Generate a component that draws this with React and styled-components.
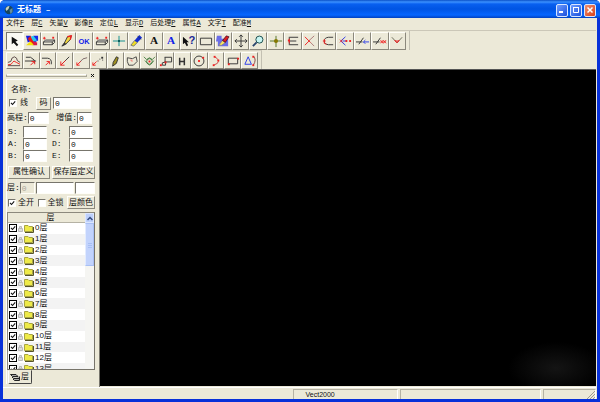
import React from "react";
import styled, { createGlobalStyle, css } from "styled-components";

const face = "#ece9d8";
const raised = css`
  border: 1px solid;
  border-color: #fffef8 #8b887c #8b887c #fffef8;
`;
const sunken = css`
  border: 1px solid;
  border-color: #77756c #fffef8 #fffef8 #77756c;
`;

const GlobalStyle = createGlobalStyle`
  *, *::before, *::after { box-sizing: border-box; }
  body {
    margin: 0;
    background: #fff;
    color: #111;
    font: 8px/10px "Liberation Mono", "Noto Sans CJK SC", monospace;
  }
  button, input { font: inherit; color: inherit; margin: 0; border-radius: 0; }
`;

const Window = styled.div`
  height: 100vh;
  min-height: 400px;
  display: flex;
  flex-direction: column;
  padding: 0 3px 3px;
  background: #0831d9;
  border-radius: 5px 5px 0 0;
  overflow: hidden;
`;
const TitleBar = styled.header`
  height: 18px;
  flex: none;
  display: flex;
  align-items: center;
  gap: 3px;
  margin: 0 -3px;
  padding: 2px 4px 0;
  background: linear-gradient(#0a50c8 0, #3b91ff 2px, #0860f0 4px, #0054e3 9px, #0666ff 15px, #0141c0 18px);
`;
const Title = styled.h1`
  flex: 1;
  margin: 0;
  color: #fff;
  font-size: 8px;
  line-height: 10px;
  font-weight: bold;
`;
const Captions = styled.div`
  display: flex;
  gap: 2px;
`;
const CaptionButton = styled.button`
  width: 12px;
  height: 13px;
  display: grid;
  place-items: center;
  padding: 0;
  border: 1px solid #d8e6ff;
  border-radius: 2px;
  background: ${(p) => (p.$close ? "linear-gradient(135deg,#f09070,#d84018)" : "linear-gradient(135deg,#6c9cff,#1c50dc)")};
`;
const Client = styled.div`
  flex: 1;
  min-height: 0;
  display: flex;
  flex-direction: column;
  padding-right: 1px;
  background: ${face};
`;
const MenuBar = styled.nav`
  height: 13px;
  display: flex;
  flex: none;
  align-items: flex-start;
  gap: 7px;
  padding: 0 3px;
  border-bottom: 1px solid #cbc7b8;
`;
const MenuItem = styled.button`
  padding: 0;
  border: 0;
  background: none;
  font-size: 7px;
  line-height: 10px;
  white-space: nowrap;
`;
const ToolBar = styled.div`
  flex: none;
  width: ${(p) => p.$width}px;
  display: grid;
  grid-template-columns: repeat(${(p) => p.$count}, 1fr);
  height: 19px;
  padding: 1px 3px 0;
  border-right: 1px solid #c3c0b2;
  & + & { border-top: 1px solid #d5d1c2; }
`;
const ToolButton = styled.button`
  display: grid;
  place-items: center;
  min-width: 0;
  padding: 0;
  background: ${(p) => (p.$pressed ? "#faf9f3" : face)};
  ${(p) => (p.$pressed ? sunken : raised)}
  svg { display: block; width: 14px; height: 14px; }
`;
const Work = styled.div`
  flex: 1;
  min-height: 0;
  display: flex;
`;
const Sidebar = styled.aside`
  width: 97px;
  flex: none;
  display: flex;
  flex-direction: column;
  padding: 3px 4px 3px 3px;
  border-right: 1px solid #77756c;
`;
const Grip = styled.div`
  display: flex;
  align-items: center;
  height: 7px;
  flex: none;
  gap: 3px;
`;
const GripLines = styled.span`
  flex: 1;
  height: 3px;
  border: 1px solid #aaa799;
  border-top-color: #fff;
`;
const CloseDock = styled.button`
  width: 5px;
  height: 7px;
  padding: 0;
  border: 0;
  background: none;
  svg { display: block; }
`;
const Panel = styled.div`
  flex: 1;
  min-height: 0;
  display: flex;
  flex-direction: column;
  border-top: 1px solid #fff;
  border-left: 1px solid #fff;
`;
const Row = styled.div`
  flex: none;
  display: flex;
  align-items: center;
  height: ${(p) => p.$h || 15}px;
  gap: ${(p) => p.$gap || 0}px;
  padding: 0 ${(p) => p.$right || 0}px 0 ${(p) => p.$left || 0}px;
  justify-content: ${(p) => (p.$spread ? "space-between" : "flex-start")};
  white-space: nowrap;
`;
const Name = styled.span`
  padding: 3px 0 0 4px;
`;
const Field = styled.label`
  display: flex;
  align-items: center;
  gap: ${(p) => p.$gap || 0}px;
`;
const TextInput = styled.input`
  width: ${(p) => p.$w}px;
  height: 12px;
  padding: 0 1px;
  line-height: 10px;
  background: #fff;
  ${sunken}
  &:disabled { background: ${face}; color: #aaa799; }
`;
const Grow = styled(TextInput)`
  flex: 1;
  min-width: 0;
`;
const Coefs = styled.div`
  flex: none;
  display: grid;
  grid-template-columns: 15px 23px 23px 24px;
  grid-auto-rows: 12px;
  align-items: center;
  padding: 0 0 2px 1px;
  label:nth-of-type(even) { padding-left: 6px; }
`;
const Push = styled.button`
  height: 13px;
  width: ${(p) => p.$w}px;
  padding: 0;
  line-height: 10px;
  white-space: nowrap;
  background: ${face};
  ${raised}
`;
const Check = styled.input`
  appearance: none;
  width: 8px;
  height: 8px;
  background: #fff;
  ${(p) => (p.$flat ? css`border: 1px solid #000;` : sunken)}
  &:checked {
    background: #fff url("data:image/svg+xml,%3Csvg xmlns='http://www.w3.org/2000/svg' viewBox='0 0 6 6'%3E%3Cpath d='M1 2.8l1.5 1.7L5.2 1.3' fill='none' stroke='%23111' stroke-width='1.1'/%3E%3C/svg%3E") center / 6px 6px;
  }
`;
const Layers = styled.section`
  flex: 1;
  min-height: 0;
  display: grid;
  grid-template-columns: 1fr 9px;
  margin-top: 3px;
  border: 1px solid;
  border-color: #8c897d #77746a #77746a #8c897d;
  background: #fff;
  overflow: hidden;
`;
const LayerColumn = styled.div`
  min-width: 0;
  overflow: hidden;
`;
const LayerHead = styled.div`
  height: 10px;
  padding-left: 8px;
  text-align: center;
  line-height: 9px;
  background: ${face};
  border-bottom: 1px solid #b5b2a4;
`;
const LayerList = styled.ul`
  display: grid;
  grid-auto-rows: 1fr;
  height: 151px;
  margin: 0;
  padding: 0;
  list-style: none;
`;
const Layer = styled.li`
  display: flex;
  align-items: center;
  padding-left: 1px;
  font-family: "Liberation Sans", "Noto Sans CJK SC", sans-serif;
  &:nth-child(even) { background: #f3f3f3; }
  label { display: flex; align-items: center; gap: 1px; }
  svg { flex: none; }
`;
const Scroll = styled.div`
  background: #f5f5f2;
`;
const ScrollUp = styled.button`
  display: grid;
  place-items: center;
  width: 9px;
  height: 10px;
  padding: 0;
  border: 1px solid #dbe6ff;
  background: #bdd0fb;
`;
const Thumb = styled.div`
  height: 43px;
  border: 1px solid #a9c0f4;
  border-left-color: #e2ebff;
  background: #c2d3fc;
  display: grid;
  place-items: center;
`;
const TabButton = styled.button`
  flex: none;
  align-self: flex-start;
  display: flex;
  align-items: center;
  gap: 1px;
  width: 24px;
  height: 14px;
  margin-left: 1px;
  padding: 0 1px;
  background: ${face};
  border: 1px solid;
  border-color: ${face} #444 #444 #fff;
  border-radius: 0 0 2px 2px;
`;
const Canvas = styled.main`
  flex: 1;
  min-width: 0;
  margin-bottom: 1px;
  border-top: 1px solid #555;
  background: radial-gradient(ellipse 48px 26px at calc(100% - 40px) calc(100% - 18px), #141414, #000) #000;
`;
const Status = styled.footer`
  flex: none;
  height: 12px;
  display: grid;
  grid-template-columns: 289fr 106fr 142fr 53fr;
  gap: 2px;
  padding-top: 1px;
  border-top: 1px solid #fff;
  font-family: "Liberation Sans", sans-serif;
  font-size: 7px;
`;
const StatusCell = styled.div`
  padding-left: 12px;
  line-height: 9px;
  border-top: 1px solid #b5b2a4;
  border-left: 1px solid #b5b2a4;
  border-right: 1px solid #fff;
  display: flex;
  justify-content: space-between;
  &:first-child { border-color: transparent; }
`;

const K = "#333";
const R = "#f02020";
const B = "#2838e8";
const L = ({ d, c = K, w = 1, f = "none" }) => <path d={d} stroke={c} strokeWidth={w} fill={f} />;
const Dot = ({ x, y, c = R, s = 2 }) => <rect x={x} y={y} width={s} height={s} fill={c} />;
const Glyph = ({ c, children, size, family }) => (
  <text x="7.5" y="11" textAnchor="middle" fill={c} fontSize={size} fontWeight="bold" fontFamily={family}>{children}</text>
);
const box = (
  <>
    <L d="M1.5 8.5L4 6.5H13.5L11 8.5Z" f="#f8f6ee" />
    <L d="M1.5 8.5V11.5H11V8.5M11 11.5L13.5 9V6.5" />
    <L d="M1 4.5H4M2.5 3V6" c={R} /><Dot x={11} y={3} />
  </>
);

const mainTools = [
  ["选择", <path d="M4 3V11L6 9.4L9.5 13L11 11.6L8 8.2L10.5 7Z" fill="#111" />],
  ["颜色", <><path d="M1 2H6L7 7L3 9Z" fill="#1420e0" /><path d="M6 2L12 10L8 12L3 5Z" fill="#e81818" /><path d="M9 2H14V7L10 9Z" fill="#1828e8" /><path d="M6 3L9 2L13 7L9 8Z" fill="#28c8ec" /><path d="M1 12L6 8L10 12Z" fill="#f4e000" /><path d="M9 8L13 9V12H9Z" fill="#d81848" /></>],
  ["图层", box],
  ["画笔", <><L d="M2 13L5 9L6 11Z" f="#222" /><L d="M5 9L8 3L12 2L11 6L6 11Z" f="#f0d840" /><L d="M8 3L12 2L11 6" c={R} w={1.5} /></>],
  ["确定", <Glyph c="#1020e8" size={8} family="Liberation Sans">OK</Glyph>],
  ["编辑图层", box],
  ["十字", <><L d="M1 7.5H14M7.5 2V13" c="#078b8b" /><Dot x={6.5} y={6.5} c="#055" /></>],
  ["刷子", <><L d="M2 12L6 7L9 9L5 13Z" f="#f2e020" c="#777" /><path d="M6 7L11 1L14 4L9 9Z" fill="#152ed0" /><L d="M9 2L13 6" c="#222" w={0.6} /></>],
  ["文字", <Glyph c="#111" size={12} family="Liberation Serif">A</Glyph>],
  ["彩色文字", <Glyph c="#1020e8" size={12} family="Liberation Serif">A</Glyph>],
  ["帮助", <><path d="M1 3V11L3 9.4L5 13L6.6 12L5 8.8H7.5Z" fill="#111" /><text x="7" y="11" fontSize="12" fontWeight="bold" fill="#1c2a96" fontFamily="Liberation Sans">?</text></>],
  ["矩形", <L d="M1.5 4.5H13.5V11.5H1.5Z" />],
  ["填充", <><path d="M1 2H6V5H13V13H2V8H0Z" fill="#6a6de8" /><L d="M3 12L7 7L10 9L6 12Z" f="#f7e460" c="#777" w={0.6} /><L d="M7 7L11 2L14 3L10 9Z" f="#d82020" c="#302" w={0.7} /></>],
  ["移动", <L d="M1 7.5H14M7.5 1V14M3 5.5L1 7.5L3 9.5M12 5.5L14 7.5L12 9.5M5.5 3L7.5 1L9.5 3M5.5 12L7.5 14L9.5 12" />],
  ["缩放", <><circle cx="9" cy="6" r="3.8" fill="#c8f5f2" stroke="#164848" /><L d="M6 9L2 13" w={2} c="#28446c" /></>],
  ["定位点", <><L d="M1 7.5H14M7.5 2V14" c="#517228" /><circle cx="7.5" cy="7.5" r="2.2" fill="#867800" /></>],
  ["平行线", <><L d="M4 3.5H13M4 7.5H11M4 11.5H13" /><L d="M3.5 3V12" c={K} /><Dot x={2} y={6} /><L d="M3.5 5V10" c={R} /></>],
  ["剪断", <><L d="M6 7.5L12 2M8 9L12 13" c="#a77" /><L d="M2 3L8 9M7 7L2 12" c={R} /></>],
  ["圆角", <><L d="M13 3.5H8Q3.5 4 3.5 7.5T8 11.5H13" /><L d="M2 7.5H5M3.5 5.5V10L6 11" c={R} /></>],
  ["分解", <><L d="M8 3L3 7.5L8 12" c={B} /><L d="M2 6L5 9M2 9L5 6" c={R} w={0.8} /><L d="M5 7.5H9" c={B} /><Dot x={8} y={6.5} /><Dot x={12} y={6.5} /></>],
  ["延伸", <><L d="M0 8.5H7M3 11L8 4" /><L d="M8 8.5H14M10 6.5L8 8.5L10 10.5" c={B} /></>],
  ["修剪", <><L d="M0 8.5H7M3 11L8 4" /><L d="M8 8.5H14M8 6.5L11 10M11 6.5L8 10M11 6.5L14 10M14 6.5L11 10" c={R} w={0.8} /></>],
  ["节点", <><L d="M2 3.5L7.5 9.5L13 3.5" c="#665" /><L d="M5 6.5L7.5 9.5L10 6.5M5.5 7.5H9.5" c={R} /></>],
];
const drawTools = [
  ["等高线", <><L d="M1 9L4 8Q5 3 8 3Q11 4 11 7L14 9M1 12.5H14" c="#544" /><L d="M1 11.5Q5 12 6 9T10 9L14 11" c={R} /></>],
  ["曲线", <><L d="M2 3.5H7L11 6.5V10M1 7.5H13" /><L d="M7 12L11 8M8 8H11.5V11" c={R} /></>],
  ["弧段", <><L d="M1 4.5H7Q12 5 11 11" /><L d="M5 12L9 8M6 8H9V11" c={R} /></>],
  ["直线", <><L d="M3 12L12 3" /><L d="M3 8V12H7M3 12L8 7" c={R} /></>],
  ["线段", <><L d="M5 9Q8 4 13 4" c="#766" /><L d="M2 12L6 8M2 9V12H5" c={R} /></>],
  ["点线", <><L d="M2 12L6 8M2 9V12H5" c={R} /><Dot x={7} y={7} c={K} s={1} /><Dot x={9} y={5} c={K} s={1} /><Dot x={11} y={3} c={K} /><Dot x={12} y={6} c={K} s={1} /></>],
  ["铅笔", <L d="M5 13L5.5 9L9 3L11 4L9 10Z" f="#a09020" />],
  ["多边形", <><L d="M2.5 4L8 5L12 3L13 8L9 12H4L2.5 8Z" w={0.9} /><Dot x={6} y={6} s={1} /><Dot x={7} y={7} s={1} /></>],
  ["闭合", <><L d="M2 3L5 6L8 4L11 6L14 3M3 7L8 12L13 7" c="#256825" w={0.8} /><circle cx="8" cy="8" r="3" fill="none" stroke="#256825" strokeWidth="0.8" /><Dot x={7} y={7} /></>],
  ["折线", <><L d="M6 3.5H13.5V8.5H6.5V3.5M7 8.5L3.5 9.5V12H7V9" /><Dot x={1} y={11} /><Dot x={6} y={8} /></>],
  ["水平", <L d="M5 4V12M10 4V12M5 8H10" w={1.6} />],
  ["圆", <><circle cx="7.5" cy="7.5" r="5.3" fill="none" stroke={K} /><Dot x={6.5} y={6.5} /><Dot x={11} y={3} /></>],
  ["圆弧", <><L d="M6 3Q12 6 9 10L5 12" c="#c44" /><Dot x={5} y={2} /><Dot x={9} y={6} /><Dot x={4} y={11} /></>],
  ["方框", <><L d="M2.5 4.5H12.5V10.5H2.5Z" /><Dot x={12} y={4} /><Dot x={2} y={10} /></>],
  ["三角", <><L d="M5.5 3L9 11H2Z" c={B} /><L d="M11 2Q15 6 11 12" c="#844" /><Dot x={10} y={2} /><Dot x={10} y={11} /></>],
];
const menus = [["文件", "F"], ["层", "C"], ["矢量", "V"], ["影像", "R"], ["定位", "L"], ["显示", "D"], ["后处理", "P"], ["属性", "A"], ["文字", "T"], ["配准", "M"]];

const Tools = ({ items, width, label, pressed }) => (
  <ToolBar role="toolbar" aria-label={label} $count={items.length} $width={width}>
    {items.map(([name, icon], i) => (
      <ToolButton key={name} aria-label={name} $pressed={i === pressed}>
        <svg viewBox="0 0 15 15">{icon}</svg>
      </ToolButton>
    ))}
  </ToolBar>
);
const Coef = ({ name, value }) => (
  <>
    <label htmlFor={`coef-${name}`}>{name}:</label>
    <TextInput id={`coef-${name}`} defaultValue={value} $w={24} />
  </>
);

export default function App() {
  return (
    <Window>
      <GlobalStyle />
      <TitleBar>
        <svg width="10" height="10" viewBox="0 0 9 10">
          <circle cx="4.5" cy="5" r="4.3" fill="#174660" />
          <path d="M1 4Q2 1 5 1L4 4L2 6Z" fill="#c8d2c2" /><path d="M5 5L8 3V7L6 9Z" fill="#668f9a" />
        </svg>
        <Title>无标题 –</Title>
        <Captions>
          <CaptionButton aria-label="最小化"><svg width="8" height="8"><path d="M1 6H5" stroke="#fff" strokeWidth="2" /></svg></CaptionButton>
          <CaptionButton aria-label="最大化"><svg width="8" height="8"><path d="M1 1.5H7M1.5 1V6.5H6.5V1" fill="none" stroke="#fff" /></svg></CaptionButton>
          <CaptionButton $close aria-label="关闭"><svg width="8" height="8"><path d="M1.5 1.5L6.5 6.5M6.5 1.5L1.5 6.5" stroke="#fff" strokeWidth="1.5" /></svg></CaptionButton>
        </Captions>
      </TitleBar>
      <Client>
        <MenuBar>
          {menus.map(([text, key]) => <MenuItem key={text}>{text}<u>{key}</u></MenuItem>)}
        </MenuBar>
        <Tools items={mainTools} width={407} label="主工具栏" pressed={0} />
        <Tools items={drawTools} width={259} label="绘图工具栏" />
        <Work>
          <Sidebar>
            <Grip>
              <GripLines />
              <CloseDock aria-label="关闭面板"><svg width="5" height="7"><path d="M1 2L4 5M4 2L1 5" stroke="#111" /></svg></CloseDock>
            </Grip>
            <Panel>
              <Row $h={16}><Name>名称:</Name></Row>
              <Row $h={14} $left={2} $right={4} $gap={2}>
                <Field $gap={3}><Check type="checkbox" defaultChecked />线</Field>
                <Row $h={14} $left={6}><Push $w={15}>码</Push></Row>
                <Grow aria-label="码" defaultValue="0" />
              </Row>
              <Row $h={16} $right={3} $spread>
                <Field>高程:<TextInput $w={21} defaultValue="0" /></Field>
                <Field>增值:<TextInput $w={15} defaultValue="0" /></Field>
              </Row>
              <Coefs>
                <Coef name="S" value="" /><Coef name="C" value="0" />
                <Coef name="A" value="0" /><Coef name="D" value="0" />
                <Coef name="B" value="0" /><Coef name="E" value="0" />
              </Coefs>
              <Row $h={16} $left={1} $spread><Push $w={42}>属性确认</Push><Push $w={43}>保存层定义</Push></Row>
              <Row $h={16} $gap={1}>
                <Field>层:<TextInput $w={15} defaultValue="0" disabled /></Field>
                <Grow aria-label="层名称" /><TextInput aria-label="层编号" $w={20} />
              </Row>
              <Row $h={13} $left={1} $spread>
                <Field $gap={2}><Check type="checkbox" defaultChecked />全开</Field>
                <Field $gap={2}><Check type="checkbox" />全锁</Field>
                <Push $w={28}>层颜色</Push>
              </Row>
              <Layers>
                <LayerColumn>
                  <LayerHead>层</LayerHead>
                  <LayerList>
                    {Array.from({ length: 14 }, (_, i) => (
                      <Layer key={i}>
                        <label>
                          <Check $flat type="checkbox" defaultChecked />
                          <svg width="5" height="7"><path d="M1.5 4V1.5H3.5V4M.5 3.5H4.5V6.5H.5Z" fill="#ddd" stroke="#bbb" /></svg>
                          <svg width="10" height="9"><path d="M.5 1.5H4L5 2.5H8.5V7.5H.5Z" fill="#eeea48" stroke="#a8a444" /><path d="M1 8.5H9.5V3" fill="none" stroke="#55532a" /></svg>
                          {i}层
                        </label>
                      </Layer>
                    ))}
                  </LayerList>
                </LayerColumn>
                <Scroll>
                  <ScrollUp aria-label="向上滚动"><svg width="6" height="5"><path d="M.5 4L3 1.5L5.5 4" fill="none" stroke="#354c80" strokeWidth="1.5" /></svg></ScrollUp>
                  <Thumb><svg width="4" height="6"><path d="M0 1.5H4M0 3.5H4M0 5.5H4" stroke="#a8bff4" /></svg></Thumb>
                </Scroll>
              </Layers>
              <TabButton>
                <svg width="10" height="8"><path d="M.5 1.5H6L8 3.5H2.5ZM2 4L3.5 5.5H9M3 6L4.5 7.5H9.5V3.5" fill="#aaa" stroke="#222" /></svg>层
              </TabButton>
            </Panel>
          </Sidebar>
          <Canvas aria-label="绘图区" />
        </Work>
        <Status>
          <StatusCell /><StatusCell>Vect2000</StatusCell><StatusCell />
          <StatusCell><span /><svg width="8" height="9"><path d="M0 9L8 1M3 9L8 4M6 9L8 7" stroke="#9e9b8e" /></svg></StatusCell>
        </Status>
      </Client>
    </Window>
  );
}
